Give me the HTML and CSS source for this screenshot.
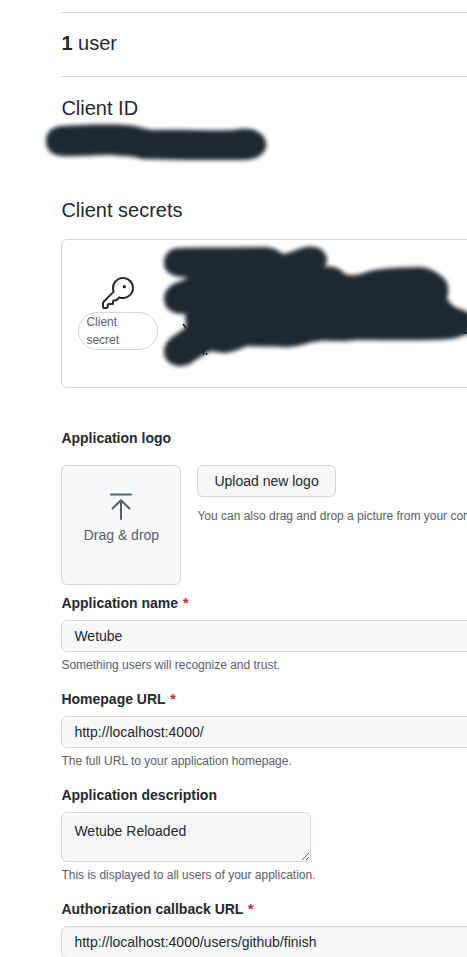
FILE: index.html
```html
<!DOCTYPE html>
<html lang="en">
<head>
<meta charset="utf-8">
<title>OAuth application settings</title>
<link rel="stylesheet" href="styles.css">
</head>
<body>
<main class="settings">
  <section class="users"><strong>1</strong> user</section>

  <section class="client-id">
    <h2>Client ID</h2>
    <svg class="redaction redaction-id" width="240" height="60" viewBox="36 112 240 60" aria-hidden="true">
      <path class="brush" d="M61 126C78 125 104 124 124 125C137 125 142 129 153 130C180 129 211 131 234 130C242 128 254 128 260 133C268 140 268 148 262 154C255 161 243 160 232 160C203 160 172 160 142 159C133 156 124 156 109 155C92 155 76 157 61 156C50 155 46 148 46 141C46 133 51 127 61 126Z"/>
    </svg>
  </section>

  <section class="secrets">
    <h2>Client secrets</h2>
    <div class="secret-card">
      <div class="secret-type">
        <svg class="key" width="32" height="32" viewBox="0 0 24 24" aria-hidden="true">
          <path d="M16.75 8.5a1.25 1.25 0 1 0 0-2.5 1.25 1.25 0 0 0 0 2.5Z"/>
          <path d="M15.75 0a8.25 8.25 0 1 1-2.541 16.101l-1.636 1.636a1.744 1.744 0 0 1-1.237.513H9.25a.25.25 0 0 0-.25.25v1.448a.876.876 0 0 1-.256.619l-.214.213a.75.75 0 0 1-.545.22H5.25a.25.25 0 0 0-.25.25v1A1.75 1.75 0 0 1 3.25 24h-1.5A1.75 1.75 0 0 1 0 22.25v-2.836c0-.464.185-.908.513-1.236l7.386-7.388A8.249 8.249 0 0 1 15.75 0ZM9 8.25a6.733 6.733 0 0 0 .463 2.462.75.75 0 0 1-.168.804l-7.722 7.721a.25.25 0 0 0-.073.177v2.836c0 .138.112.25.25.25h1.5a.25.25 0 0 0 .25-.25v-1c0-.966.784-1.75 1.75-1.75H7.5v-1c0-.966.784-1.75 1.75-1.75h1.086a.25.25 0 0 0 .177-.073l1.971-1.972a.75.75 0 0 1 .804-.168A6.75 6.75 0 1 0 9 8.25Z"/>
        </svg>
        <span class="pill">Client secret</span>
      </div>
      <svg class="redaction redaction-secret" width="330" height="140" viewBox="154 236 330 140" aria-hidden="true">
        <path class="brush" d="M179 248C210 247 241 248 264 247C274 247 279 251 283 254C290 253 297 249 306 247C318 245 326 251 327 259C327 263 326 266 323 267C333 265 340 268 345 274C350 276 356 275 361 274C377 267 401 268 419 267C428 267 435 271 441 276C448 280 450 290 447 298C449 303 454 307 460 309C467 311 475 316 475 323C474 333 462 337 451 339C434 341 384 340 357 340C350 340 345 342 339 341C332 341 323 340 313 342C304 344 295 348 282 347C271 346 256 347 247 346C238 350 230 353 224 353C216 353 214 350 209 352C201 355 195 362 187 365C175 369 164 362 164 352C164 344 169 339 175 335C180 331 188 328 186 323C185 320 185 317 186 314C173 315 164 309 164 299C164 290 171 284 178 282C183 281 187 278 189 277C178 278 164 275 164 263C164 254 170 248 179 248Z"/>
        <path class="remnant" d="M183 324L186 328M203.500 350V355M206.500 353V355M463 333H467"/>
      </svg>
    </div>
  </section>

  <section class="logo">
    <h3>Application logo</h3>
    <div class="logo-row">
      <div class="dropzone">
        <svg width="32" height="32" viewBox="0 0 32 32" aria-hidden="true">
          <path d="M6 4.500H26M16 29V11M7.500 18.500L16 10.200L24.500 18.500"/>
        </svg>
        <span>Drag &amp; drop</span>
      </div>
      <div class="upload">
        <button type="button">Upload new logo</button>
        <p class="note">You can also drag and drop a picture from your computer.</p>
      </div>
    </div>
  </section>

  <form class="fields">
    <div class="field">
      <label for="name">Application name <span class="required">*</span></label>
      <input id="name" type="text" value="Wetube">
      <p class="note">Something users will recognize and trust.</p>
    </div>
    <div class="field">
      <label for="url">Homepage URL <span class="required">*</span></label>
      <input id="url" type="text" value="http://localhost:4000/">
      <p class="note">The full URL to your application homepage.</p>
    </div>
    <div class="field">
      <label for="description">Application description</label>
      <textarea id="description">Wetube Reloaded</textarea>
      <p class="note">This is displayed to all users of your application.</p>
    </div>
    <div class="field">
      <label for="callback">Authorization callback URL <span class="required">*</span></label>
      <input id="callback" type="text" value="http://localhost:4000/users/github/finish">
    </div>
  </form>
</main>
</body>
</html>
```
FILE: styles.css
```css
* { box-sizing: border-box; }

html, body { height: 100%; overflow: hidden; }

body {
  margin: 0;
  background: #fff;
  color: #24292f;
  font: 14px/21px "Liberation Sans", Arial, sans-serif;
}

.settings { width: 720px; padding: 12px 0 0 61.4px; }

h2, h3, p { margin: 0; }
h2 { font-size: 20px; line-height: 30px; font-weight: 400; }
h3 { font-size: 14px; line-height: 21px; }

.users {
  height: 65px;
  padding-top: 15px;
  border: solid #d0d7de;
  border-width: 1px 0;
  font-size: 20px;
  line-height: 30px;
}

.client-id, .secret-card { position: relative; }
.client-id { height: 102px; padding-top: 16px; }
.secrets { padding-top: 16px; }

.redaction { position: absolute; overflow: visible; }
.redaction-id { left: -25px; top: 35px; }
.redaction-secret { left: 92px; top: -4px; }
.brush { fill: #1e2830; filter: blur(1.9px); }
.remnant { fill: none; stroke: #10161b; stroke-width: 1.3; }

.secret-card {
  height: 149px;
  margin-top: 14px;
  padding: 37px 16px 0;
  border: 1px solid #d0d7de;
  border-radius: 6px;
}

.secret-type { display: flex; flex-direction: column; align-items: center; width: 80px; }
.key { margin-bottom: 3px; fill: #24292f; }

.pill {
  width: 80px;
  padding: 0 7px;
  border: 1px solid #d0d7de;
  border-radius: 32px;
  color: #57606a;
  font-size: 12px;
  line-height: 18px;
}

.logo { margin-top: 40px; }
.logo-row { display: flex; gap: 16px; margin-top: 16px; }

.dropzone {
  display: flex;
  flex-direction: column;
  align-items: center;
  width: 120px;
  height: 120px;
  padding-top: 24px;
  border: 1px solid #d0d7de;
  border-radius: 6px;
  background: #f6f8fa;
  color: #57606a;
}
.dropzone svg { margin-bottom: 3px; fill: none; stroke: #57606a; stroke-width: 2; stroke-linecap: round; stroke-linejoin: round; }

button {
  display: block;
  height: 32px;
  padding: 0 16px;
  border: 1px solid #d5d8da;
  border-radius: 6px;
  background: #f6f8fa;
  box-shadow: 0 1px 0 rgba(27, 31, 36, 0.04);
  color: #24292f;
  font: inherit;
}

.note { color: #57606a; font-size: 12px; line-height: 18px; }
.upload .note { margin-top: 10px; white-space: nowrap; }

.fields { display: flex; flex-direction: column; gap: 15px; margin-top: 8px; }
.field { display: flex; flex-direction: column; align-items: flex-start; }
label { margin-bottom: 6px; font-weight: 700; }
.required { margin-left: 1px; color: #cf222e; }

input, textarea {
  border: 1px solid #d0d7de;
  border-radius: 6px;
  background: #f6f8fa;
  color: #24292f;
  font: inherit;
}
input { width: 440px; height: 32px; padding: 5px 12px; }
textarea { width: 250px; height: 50px; padding: 8px 12px; overflow: hidden; resize: both; }
.field .note { margin-top: 4px; }
```
